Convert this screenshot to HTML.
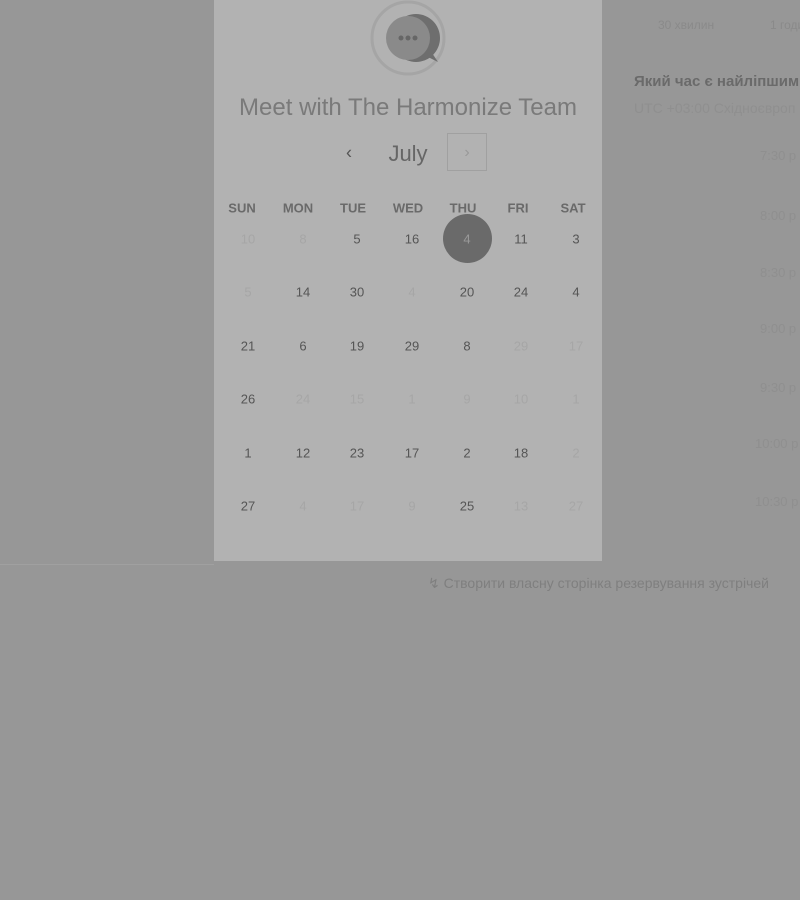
<!DOCTYPE html>
<html><head><meta charset="utf-8"><style>
body{margin:0;width:800px;height:900px;background:#979797;position:relative;overflow:hidden;font-family:"Liberation Sans","DejaVu Sans",sans-serif}
.panel{position:absolute;left:214px;top:0;width:388px;height:561px;background:#b2b2b2}
.t{position:absolute;transform:translate(-50%,-50%);white-space:nowrap}
.d{font-size:13px;color:#555}.f{font-size:13px;color:#a6a6a6}
.h{font-size:13px;color:#6a6a6a;font-weight:bold}
.r{position:absolute;white-space:nowrap;color:#8a8a8a;font-size:13px}
</style></head><body>
<div class="panel"></div>
<div style="position:absolute;left:0;top:564px;width:214px;height:1px;background:#a0a0a0"></div>
<svg style="position:absolute;left:368px;top:0" width="80" height="80">
<circle cx="40" cy="38" r="36" fill="none" stroke="#a5a5a5" stroke-width="3"/>
<circle cx="48" cy="38" r="24" fill="#6e6e6e"/>
<path d="M58 56 L70 62 L62 50Z" fill="#6e6e6e"/>
<circle cx="40" cy="38" r="22" fill="#8a8a8a"/>
<circle cx="33" cy="38" r="2.5" fill="#666"/><circle cx="40" cy="38" r="2.5" fill="#666"/><circle cx="47" cy="38" r="2.5" fill="#666"/>
</svg>
<div class="t" style="left:408px;top:108px;font-size:24px;color:#7a7a7a">Meet with The Harmonize Team</div>
<div class="t" style="left:349px;top:153px;font-size:18px;color:#555">‹</div>
<div class="t" style="left:408px;top:154px;font-size:22px;color:#666">July</div>
<div style="position:absolute;left:447px;top:133px;width:40px;height:38px;border:1px solid #a0a0a0;box-sizing:border-box"></div>
<div class="t" style="left:467px;top:153px;font-size:16px;color:#999">›</div>
<div class="t h" style="left:242px;top:208px">SUN</div>
<div class="t h" style="left:298px;top:208px">MON</div>
<div class="t h" style="left:353px;top:208px">TUE</div>
<div class="t h" style="left:408px;top:208px">WED</div>
<div class="t h" style="left:463px;top:208px">THU</div>
<div class="t h" style="left:518px;top:208px">FRI</div>
<div class="t h" style="left:573px;top:208px">SAT</div>
<div style="position:absolute;left:443px;top:214px;width:49px;height:49px;border-radius:50%;background:#6a6a6a"></div>
<div id="cal"></div>
<div class="r" style="left:658px;top:18px;font-size:12px">30 хвилин</div>
<div class="r" style="left:770px;top:18px;font-size:12px">1 годи</div>
<div class="r" style="left:634px;top:73px;font-size:15px;font-weight:bold;color:#6a6a6a">Який час є найліпшим</div>
<div class="r" style="left:634px;top:100px;font-size:14px;color:#8f8f8f">UTC +03:00 Східноєвроп</div>
<div class="r" style="left:760px;top:148px;color:#8f8f8f">7:30 p</div>
<div class="r" style="left:760px;top:208px;color:#8f8f8f">8:00 p</div>
<div class="r" style="left:760px;top:265px;color:#8f8f8f">8:30 p</div>
<div class="r" style="left:760px;top:321px;color:#8f8f8f">9:00 p</div>
<div class="r" style="left:760px;top:380px;color:#8f8f8f">9:30 p</div>
<div class="r" style="left:755px;top:436px;color:#8f8f8f">10:00 p</div>
<div class="r" style="left:755px;top:494px;color:#8f8f8f">10:30 p</div>
<div class="r" style="left:428px;top:575px;font-size:14px;color:#7f7f7f">↯ Створити власну сторінка резервування зустрічей</div>
<script>
var rows=[["10f","8f","5","16","4w","11","3"],["5f","14","30","4f","20","24","4"],["21","6","19","29","8","29f","17f"],["26","24f","15f","1f","9f","10f","1f"],["1","12","23","17","2","18","2f"],["27","4f","17f","9f","25","13f","27f"]];
var xs=[248,303,357,412,467,521,576],ys=[239,292,346,399,453,506],h="";
rows.forEach(function(r,i){r.forEach(function(v,j){var c="d",s="",n=v;if(v.slice(-1)=="f"){c="f";n=v.slice(0,-1)}if(v.slice(-1)=="w"){n=v.slice(0,-1);s="color:#999;"}
h+='<div class="t '+c+'" style="'+s+'left:'+xs[j]+'px;top:'+ys[i]+'px">'+n+'</div>'})});
document.getElementById("cal").innerHTML=h;
</script>
</body></html>
